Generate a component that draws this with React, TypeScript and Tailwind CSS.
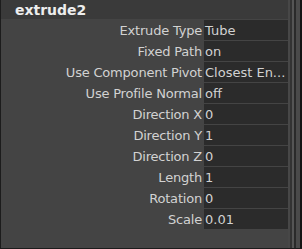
const rows: [string, string][] = [
  ['Extrude Type', 'Tube'],
  ['Fixed Path', 'on'],
  ['Use Component Pivot', 'Closest En...'],
  ['Use Profile Normal', 'off'],
  ['Direction X', '0'],
  ['Direction Y', '1'],
  ['Direction Z', '0'],
  ['Length', '1'],
  ['Rotation', '0'],
  ['Scale', '0.01'],
];

export default function App() {
  return (
    <div className="w-[302px] h-[249px] flex bg-[#444444] border-l border-b border-[#1c1c1c] font-['DejaVu_Sans',sans-serif] text-[13px] text-[#d2d2d2] overflow-hidden">
      <div className="flex-1 flex flex-col">
        {/* section header */}
        <div className="h-[19px] bg-[#3a3a3a] pl-[14px] flex items-center">
          <span className="text-[14px] font-bold text-[#ededed] leading-none">extrude2</span>
        </div>
        <div className="flex flex-col gap-[1px] pt-[1px]">
          {rows.map(([label, value]) => (
            <div key={label} className="flex h-[20px] items-center">
              <div className="w-[203px] text-right pr-[2px] whitespace-nowrap leading-none tracking-[-0.2px]">{label}</div>
              <div className="flex-1 h-full bg-[#2b2b2b] flex items-center pl-[1px] whitespace-nowrap overflow-hidden leading-none">
                {value}
              </div>
            </div>
          ))}
        </div>
      </div>
      {/* scrollbar edge */}
      <div className="flex h-full">
        <div className="w-[2px] bg-[#474747]" />
        <div className="w-[2px] bg-[#333333]" />
        <div className="w-[2px] bg-[#555555]" />
        <div className="w-[2px] bg-[#2a2a2a]" />
        <div className="w-[4px] bg-[#4a4a4a]" />
        <div className="w-[2px] bg-[#141414]" />
      </div>
    </div>
  );
}
